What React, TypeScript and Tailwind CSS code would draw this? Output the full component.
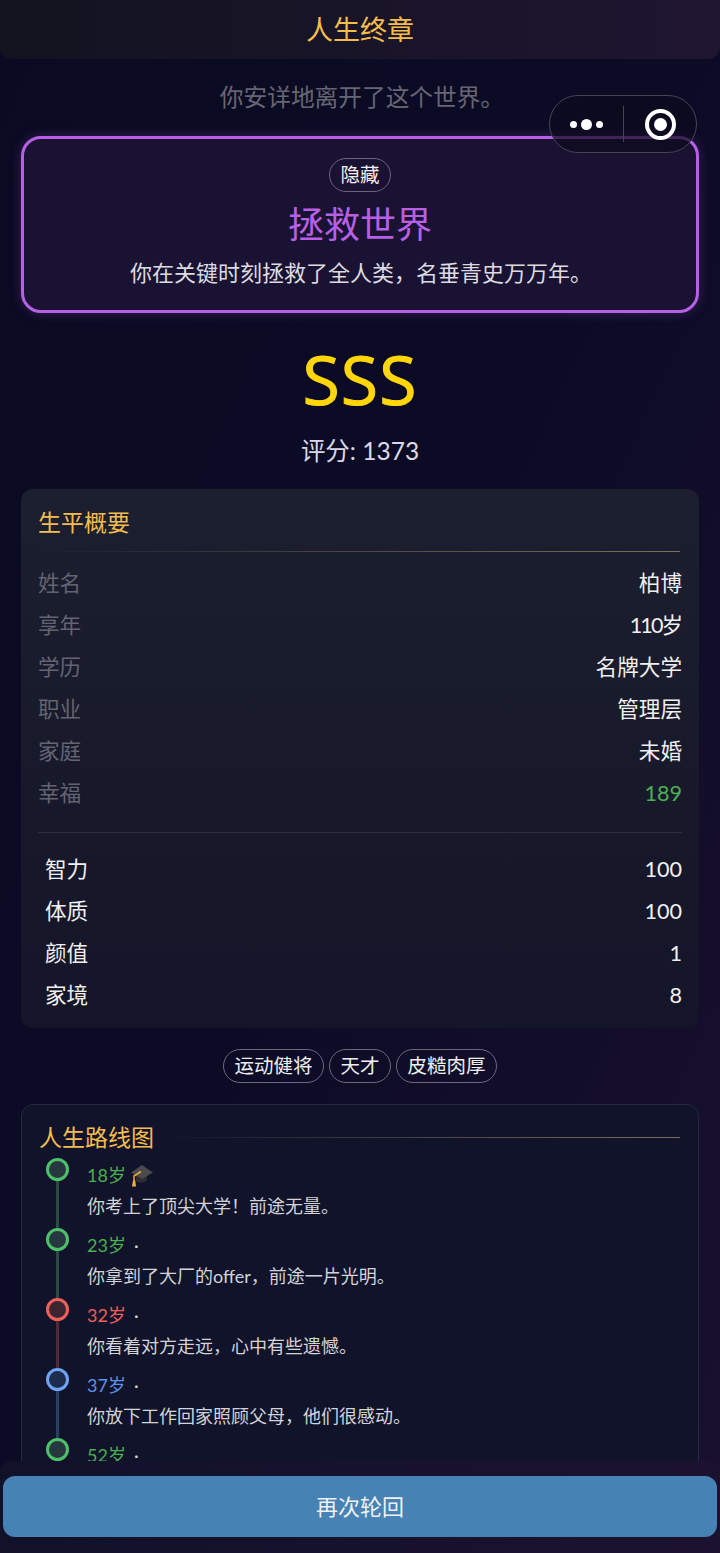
const basics = [
  { label: '姓名', value: '柏博' },
  { label: '享年', value: '110岁', valueClass: 'mr-[1px] text-[#f0f0f0] tracking-[-2px]' },
  { label: '学历', value: '名牌大学' },
  { label: '职业', value: '管理层' },
  { label: '家庭', value: '未婚' },
  { label: '幸福', value: '189', valueClass: 'text-[#4caf50]' },
]

const attrs = [
  { label: '智力', value: '100' },
  { label: '体质', value: '100' },
  { label: '颜值', value: '1' },
  { label: '家境', value: '8' },
]

const tags = ['运动健将', '天才', '皮糙肉厚']

const events = [
  { age: '18岁', text: '你考上了顶尖大学！前途无量。', ageClass: 'text-[#4caf50]', dotClass: 'border-[#4fc06a] bg-[#27373f]', lineClass: 'bg-[#2f4a45]', cap: true },
  { age: '23岁', text: '你拿到了大厂的offer，前途一片光明。', ageClass: 'text-[#4caf50]', dotClass: 'border-[#4fc06a] bg-[#27373f]', lineClass: 'bg-[#2f4a45]' },
  { age: '32岁', text: '你看着对方走远，心中有些遗憾。', ageClass: 'text-[#f0605a]', dotClass: 'border-[#f0605a] bg-[#3a2531]', lineClass: 'bg-[#4d2c35]' },
  { age: '37岁', text: '你放下工作回家照顾父母，他们很感动。', ageClass: 'text-[#5d92e6]', dotClass: 'border-[#6ea4f2] bg-[#1e2c4d]', lineClass: 'bg-[#2b3f63]' },
  { age: '52岁', text: '', ageClass: 'text-[#4caf50]', dotClass: 'border-[#4fc06a] bg-[#27373f]', lineClass: 'bg-[#2f4a45]' },
]

const GradCap = () => (
  <svg width="24" height="24" viewBox="0 0 24 24" className="ml-[3px] shrink-0">
    <path d="M7 12v6c3 2.500 8 2.500 11-1v-5z" fill="#2e2e32" />
    <path d="M13 2 24 9.500 13 16 2 9.500z" fill="#4a4a4f" />
    <path d="M12 8.500 5 13v6" fill="none" stroke="#e8a93c" strokeWidth="1.500" />
    <path d="M3 23.500l1-6h2.200l.8 6z" fill="#f0b040" />
  </svg>
)

const App = () => {
  return (
    <div className="relative flex h-[1553px] w-[720px] flex-col overflow-hidden bg-gradient-to-br from-[#0a0a22] via-[#0c0b26] to-[#1a1030] font-['Lato','Noto_Sans_CJK_SC',sans-serif] text-white">
      {/* title bar */}
      <div className="flex h-[59px] shrink-0 items-center justify-center rounded-b-xl bg-gradient-to-r from-[#12131f] to-[#1f1531] pt-[1px]">
        <h1 className="text-[27px] font-normal text-[#f5bd4f]">人生终章</h1>
      </div>

      <div className="flex min-h-0 flex-1 flex-col overflow-hidden px-[21px]">
        <p className="mt-[23px] h-[30px] pl-[4px] text-center text-[23.7px] leading-[30px] text-[#666673]">你安详地离开了这个世界。</p>

        <div className="mt-[24px] flex h-[177px] shrink-0 flex-col items-center rounded-[20px] border-[3px] border-[#b760e6] bg-[#1a1233] shadow-[0_0_12px_rgba(183,96,230,0.25)]">
          <span className="mt-[19px] flex h-[34px] items-center rounded-full border border-[#6a6578] px-[10.5px] text-[19.5px] text-[#f0f0f0]">隐藏</span>
          <h2 className="mt-[10px] text-[36px] leading-[44px] font-normal text-[#b760e6]">拯救世界</h2>
          <p className="mt-[12px] pl-[2px] text-[22px] leading-[30px] text-[#dcdce0]">你在关键时刻拯救了全人类，名垂青史万万年。</p>
        </div>

        <div className="mt-[24px] text-center font-['Open_Sans'] text-[68px] leading-[84px] tracking-[1px] text-[#ffd60a] [-webkit-text-stroke:1px_#ffd60a]">SSS</div>
        <div className="mt-[13px] text-center text-[24.5px] leading-[34px] text-[#d8d8e6]">评分: 1373</div>

        {/* summary */}
        <div className="mt-[21px] shrink-0 rounded-xl bg-gradient-to-b from-[#1c1f30] to-[#141528] px-[17px] pt-[17px] pb-[12px]">
          <div className="h-[45px]">
            <h3 className="text-[23px] leading-[32px] font-normal text-[#f5bd4f]">生平概要</h3>
          </div>
          <div className="mr-[2px] h-px bg-gradient-to-r from-transparent to-[#7d7058]" />
          <div className="mt-[10px] flex flex-col">
            {basics.map((row) => (
              <div key={row.label} className="flex h-[42px] items-center justify-between text-[21.6px]">
                <span className="text-[#636371]">{row.label}</span>
                <span className={row.valueClass ?? 'text-[#f0f0f0]'}>{row.value}</span>
              </div>
            ))}
          </div>
          <div className="mt-[18px] mb-[15px] h-px bg-[#2b2d3d]" />
          <div className="flex flex-col">
            {attrs.map((row) => (
              <div key={row.label} className="flex h-[42px] items-center justify-between pl-[7px] text-[21.6px] text-[#f0f0f0]">
                <span>{row.label}</span>
                <span>{row.value}</span>
              </div>
            ))}
          </div>
        </div>

        <div className="mt-[21px] flex shrink-0 justify-center gap-[5px]">
          {tags.map((tag) => (
            <span key={tag} className="flex h-[34px] items-center rounded-full border border-[#6a6a7a] px-[10.5px] text-[19.5px] text-[#eeeeee]">{tag}</span>
          ))}
        </div>

        {/* roadmap */}
        <div className="mt-[21px] shrink-0 rounded-xl border border-[#262a3d] bg-[#10132a] pr-[17px] pl-[7px] pt-[16px]">
          <div className="flex items-center pl-[10px]">
            <h3 className="text-[23px] leading-[32px] font-normal text-[#f5bd4f]">人生路线图</h3>
            <div className="mr-px h-px flex-1 bg-gradient-to-r from-transparent to-[#7d7058]" />
          </div>
          <div className="mt-[5px] flex flex-col">
            {events.map((ev) => (
              <div key={ev.age} className="flex h-[70px]">
                <div className="mr-[2px] flex w-[56px] shrink-0 flex-col items-center">
                  <div className={`h-[23px] w-[23px] shrink-0 rounded-full border-[3px] ${ev.dotClass}`} />
                  <div className={`w-[3px] flex-1 ${ev.lineClass}`} />
                </div>
                <div className="flex flex-col pt-[3px]">
                  <div className="flex h-[28px] items-center">
                    <span className={`text-[18px] ${ev.ageClass}`}>{ev.age}</span>
                    {ev.cap ? <GradCap /> : <span className="ml-[8px] text-[18px] text-[#d8d8d8]">·</span>}
                  </div>
                  <p className="mt-[3px] text-[18px] leading-[28px] text-[#d4d4d8]">{ev.text}</p>
                </div>
              </div>
            ))}
          </div>
        </div>
      </div>

      {/* footer */}
      <div className="flex h-[92px] shrink-0 items-start rounded-t-xl bg-gradient-to-r from-[#11112a] to-[#1c1230] px-[3px] pt-[15px]">
        <button className="h-[61px] w-full rounded-xl bg-[#4682b4] text-[22px] text-[#f0f0f0]">再次轮回</button>
      </div>

      {/* wechat capsule */}
      <div className="absolute top-[95px] left-[549px] flex h-[58px] w-[148px] items-center rounded-full border border-[#474454] bg-[#0b0a1c]/70">
        <div className="flex w-[73px] items-center justify-center gap-[4px]">
          <span className="h-[7px] w-[7px] rounded-full bg-white" />
          <span className="h-[11px] w-[11px] rounded-full bg-white" />
          <span className="h-[7px] w-[7px] rounded-full bg-white" />
        </div>
        <div className="h-[36px] w-px bg-[#474454]" />
        <div className="flex flex-1 items-center justify-center">
          <div className="flex h-[31px] w-[31px] items-center justify-center rounded-full border-[4px] border-white">
            <span className="h-[13px] w-[13px] rounded-full bg-white" />
          </div>
        </div>
      </div>
    </div>
  )
}

export default App
